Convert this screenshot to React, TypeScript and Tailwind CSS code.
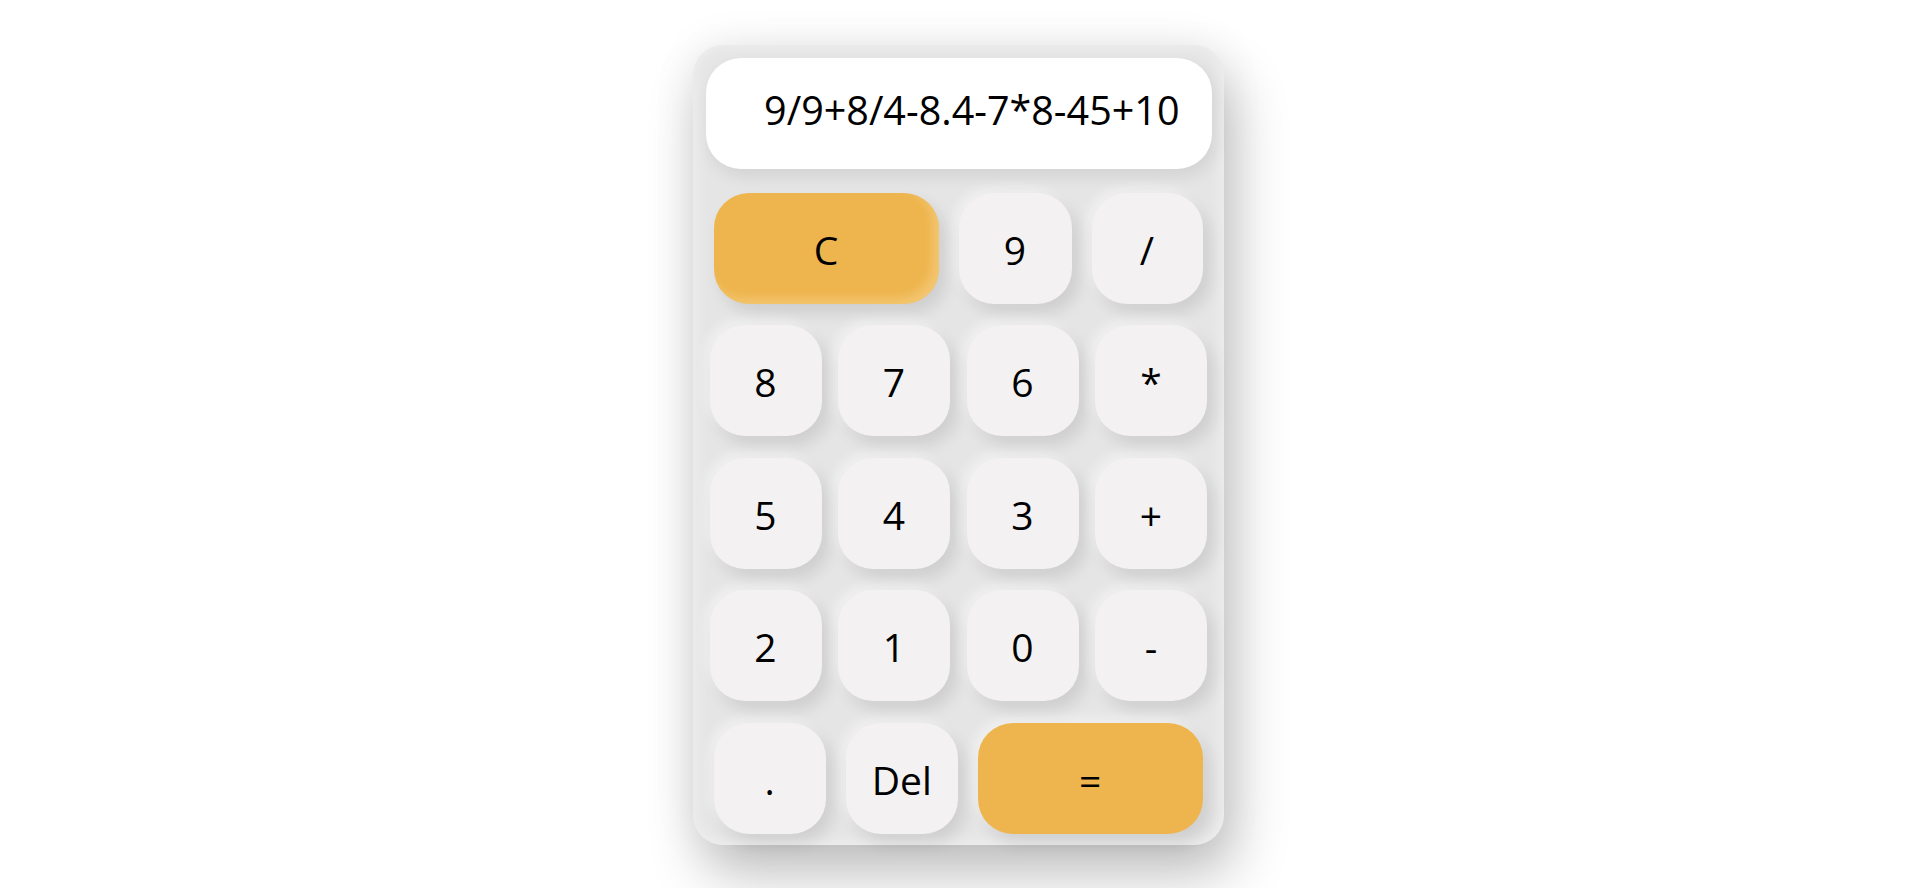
import React from "react";

const keyBase =
  "h-[111px] rounded-[35px] flex items-center justify-center pt-[4px] text-[39px] text-black shadow-[7px_9px_16px_rgba(0,0,0,0.1),-5px_-5px_12px_rgba(255,255,255,0.45)]";
const light = `${keyBase} bg-[#f3f1f1]`;
const orange = `${keyBase} bg-[#eeb54e]`;

const Key: React.FC<{ label: string; className: string }> = ({ label, className }) => (
  <button className={className}>{label}</button>
);

const ROWS = [
  ["8", "7", "6", "*"],
  ["5", "4", "3", "+"],
  ["2", "1", "0", "-"],
];

export default function App() {
  return (
    <div
      className="min-h-screen bg-white flex justify-center pt-[45px]"
      style={{ fontFamily: '"Open Sans", "Noto Sans", sans-serif' }}
    >
      <div className="w-[531px] h-[800px] rounded-[30px] bg-[#e6e5e5] flex flex-col gap-[21.5px] pt-[13px] shadow-[10px_30px_55px_rgba(0,0,0,0.24),0_0_45px_rgba(0,0,0,0.07),inset_0_0_18px_rgba(255,255,255,0.5)]">
        <div className="mx-[12.5px] h-[111px] rounded-[35px] bg-white flex items-center justify-end pr-[32px] pb-[6px] text-[39.5px] text-black shadow-[4px_8px_16px_rgba(0,0,0,0.08)] mb-[2px]">
          9/9+8/4-8.4-7*8-45+10
        </div>

        <div className="flex pl-[20.5px] gap-[20px]">
          <Key label="C" className={`${orange} w-[225px] shadow-[7px_9px_16px_rgba(0,0,0,0.1),inset_-7px_-6px_10px_rgba(255,235,190,0.3)]`} />
          <Key label="9" className={`${light} w-[113px]`} />
          <Key label="/" className={`${light} w-[111px]`} />
        </div>

        {ROWS.map((row) => (
          <div key={row.join("")} className="flex pl-[16.5px] gap-[16.5px]">
            {row.map((k) => (
              <Key key={k} label={k} className={`${light} w-[112px]`} />
            ))}
          </div>
        ))}

        <div className="flex pl-[20.5px] gap-[20.5px]">
          <Key label="." className={`${light} w-[112px]`} />
          <Key label="Del" className={`${light} w-[111.5px]`} />
          <Key label="=" className={`${orange} w-[224.5px]`} />
        </div>
      </div>
    </div>
  );
}
